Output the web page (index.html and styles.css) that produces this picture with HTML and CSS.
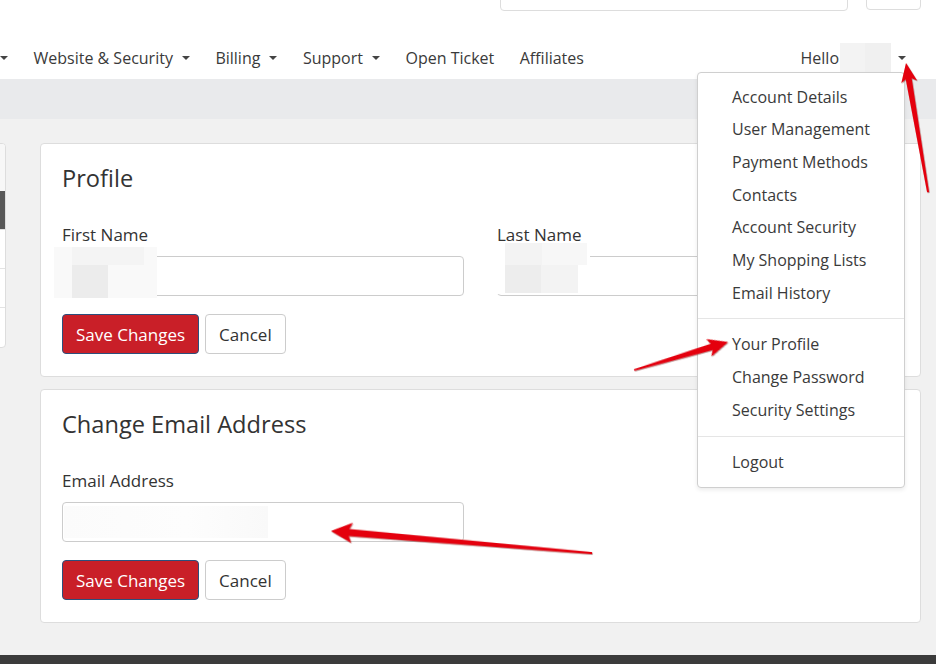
FILE: index.html
```html
<!DOCTYPE html>
<html lang="en">
<head>
	<meta charset="UTF-8">
	<title>Your Profile</title>
	<link rel="stylesheet" href="styles.css">
</head>
<body>
	<div class="topbar">
		<div class="search"></div>
		<div class="cart"></div>
	</div>

	<div class="navbar">
		<ul class="menu">
			<li class="drop"></li>
			<li class="drop">Website &amp; Security</li>
			<li class="drop">Billing</li>
			<li class="drop">Support</li>
			<li>Open Ticket</li>
			<li>Affiliates</li>
		</ul>
		<div class="account">
			<span>Hello</span>
			<span class="name"></span>
			<span class="caret"></span>

			<div class="dropdown">
				<a>Account Details</a>
				<a>User Management</a>
				<a>Payment Methods</a>
				<a>Contacts</a>
				<a>Account Security</a>
				<a>My Shopping Lists</a>
				<a>Email History</a>
				<div class="divider"></div>
				<a>Your Profile</a>
				<a>Change Password</a>
				<a>Security Settings</a>
				<div class="divider"></div>
				<a>Logout</a>
			</div>
		</div>
	</div>

	<div class="breadcrumb"></div>

	<div class="main">
		<div class="sidebar">
			<div class="side-head"></div>
			<div class="side-item active"></div>
			<div class="side-item"></div>
			<div class="side-item"></div>
			<div class="side-item last"></div>
		</div>

		<div class="content">
			<div class="card">
				<h3>Profile</h3>
				<div class="row">
					<div class="field">
						<label>First Name</label>
						<div class="input"></div>
						<div class="blur b1"></div>
						<div class="blur b1a"></div>
						<div class="blur b2"></div>
					</div>
					<div class="field">
						<label>Last Name</label>
						<div class="input"></div>
						<div class="blur b3"></div>
						<div class="blur b4"></div>
						<div class="blur b5"></div>
					</div>
				</div>
				<div class="actions">
					<button class="btn btn-save">Save Changes</button>
					<button class="btn">Cancel</button>
				</div>
			</div>

			<div class="card">
				<h3>Change Email Address</h3>
				<div class="row">
					<div class="field">
						<label>Email Address</label>
						<div class="input"></div>
						<div class="blur b6"></div>
					</div>
				</div>
				<div class="actions">
					<button class="btn btn-save">Save Changes</button>
					<button class="btn">Cancel</button>
				</div>
			</div>
		</div>
	</div>

	<div class="footer"></div>

	<!-- annotation arrows -->
	<svg class="arrows" width="936" height="664" viewBox="0 0 936 664">
		<defs>
			<filter id="sh" x="-10%" y="-10%" width="120%" height="120%">
				<feDropShadow dx="0.6" dy="0.8" stdDeviation="0.6" flood-color="#600" flood-opacity="0.5"/>
			</filter>
		</defs>
		<g fill="#e4000f" filter="url(#sh)">
			<polygon transform="translate(906 63) rotate(80.3)" points="0,0 19,-8 16,-3 131,-1 131,1 16,3 19,8"/>
			<polygon transform="translate(728 342) rotate(163.4)" points="0,0 20,-9 17,-3.2 98,-0.8 98,0.8 17,3.2 20,9"/>
			<polygon transform="translate(331 531) rotate(4.84)" points="0,0 21,-10 18,-3.5 262,-0.9 262,0.9 18,3.5 21,10"/>
		</g>
	</svg>
</body>
</html>
```

FILE: styles.css
```css
*{
	padding: 0;
	margin: 0;
	box-sizing: border-box;
}
li{
	list-style: none;
}
body{
	position: relative;
	width: 936px;
	height: 664px;
	overflow: hidden;
	background: #f1f1f1;
	font-family: "Open Sans", "Liberation Sans", sans-serif;
	font-size: 16px;
	color: #333;
}

/* header */
.topbar{
	display: flex;
	height: 36px;
	padding-right: 15px;
	background: #fff;
	justify-content: flex-end;
	gap: 18px;
}
.search{
	margin-top: -29px;
	width: 348px;
	height: 40px;
	border: 1px solid #ddd;
	border-radius: 4px;
}
.cart{
	margin-top: -30px;
	width: 55px;
	height: 40px;
	border: 1px solid #ddd;
	border-radius: 4px;
}
.navbar{
	position: relative;
	display: flex;
	height: 43px;
	padding-right: 30px;
	background: #fff;
	justify-content: space-between;
	align-items: center;
	color: #3a3a3a;
	z-index: 2;
}
.menu{
	display: flex;
	margin-left: -9px;
	gap: 25.5px;
}
.menu li{
	display: flex;
	align-items: center;
}
.drop::after,
.caret{
	content: "";
	display: inline-block;
	margin-left: 9px;
	border-top: 4px solid #444;
	border-left: 4px solid transparent;
	border-right: 4px solid transparent;
}
.account{
	position: relative;
	display: flex;
	align-items: center;
}
.name{
	display: inline-block;
	margin-left: 1px;
	width: 51px;
	height: 30px;
	background: linear-gradient(90deg, #f3f3f3 0, #f3f3f3 50%, #f0f0f0 50%);
}
.caret{
	margin-left: 7px;
}
.dropdown{
	position: absolute;
	top: 29px;
	right: 1px;
	width: 208px;
	padding: 8px 0 9px;
	background: #fff;
	border: 1px solid #cfcfcf;
	border-radius: 4px;
	box-shadow: 0 2px 4px rgba(0,0,0,.08);
}
.dropdown a{
	display: block;
	padding-left: 34px;
	line-height: 32.7px;
	color: #3a3a3a;
}
.divider{
	margin: 9px 0;
	height: 1px;
	background: #e5e5e5;
}
.breadcrumb{
	height: 40px;
	background: #e9eaec;
}

/* main area */
.main{
	display: flex;
	height: 536px;
	padding: 24px 15px 0 0;
	gap: 34px;
}
.sidebar{
	flex: none;
	margin-left: -194px;
	width: 200px;
	height: 205px;
	background: #fff;
	border: 1px solid #ddd;
	border-radius: 4px;
	overflow: hidden;
}
.side-head{
	height: 47px;
	background: #f7f7f7;
}
.side-item{
	height: 39px;
	border-top: 1px solid #e3e3e3;
}
.side-item.active{
	height: 38px;
	background: #585858;
	border-top: 0;
}
.content{
	flex: 1;
}
.card{
	margin-bottom: 12px;
	padding: 20px 21px 22px;
	background: #fff;
	border: 1px solid #ddd;
	border-radius: 4px;
}
.card h3{
	font-size: 23.6px;
	font-weight: 400;
	line-height: 29px;
	color: #333;
}
.row{
	display: grid;
	margin-top: 30px;
	grid-template-columns: 1fr 1fr;
	gap: 33px;
}
.field{
	position: relative;
}
.field label{
	display: block;
	font-size: 17px;
	line-height: 24px;
	color: #333;
}
.input{
	margin-top: 9px;
	height: 40px;
	border: 1px solid #ccc;
	border-radius: 4px;
}
.blur{
	position: absolute;
}
.b1{ left: -8px; top: 24px; width: 103px; height: 51px; background: #f9f9f9; }
.b1a{ left: 10px; top: 24px; width: 72px; height: 18px; background: #f4f4f4; }
.b2{ left: 10px; top: 42px; width: 36px; height: 33px; background: #ececec; }
.b3{ left: -1px; top: 20px; width: 94px; height: 51px; background: #fff; }
.b4{ left: 8px; top: 20px; width: 82px; height: 22px; background: linear-gradient(90deg, #f3f3f3 0, #f3f3f3 45%, #f7f7f7 45%); }
.b5{ left: 8px; top: 42px; width: 73px; height: 28px; background: linear-gradient(90deg, #ededed 0, #ededed 50%, #f3f3f3 50%); }
.b6{ left: 2px; top: 37px; width: 204px; height: 32px; background: linear-gradient(90deg, #fbfbfb, #fdfdfd 60%, #f9f9f9); }
.actions{
	display: flex;
	margin-top: 18px;
	gap: 6px;
}
.btn{
	height: 40px;
	padding: 0 13px;
	font-family: inherit;
	font-size: 17px;
	color: #333;
	background: #fff;
	border: 1px solid #ccc;
	border-radius: 4px;
}
.btn-save{
	color: #fff;
	background: #c91f28;
	border-color: #2c4f7c;
}
.footer{
	height: 9px;
	background: #3b3b3b;
}
.arrows{
	position: absolute;
	top: 0;
	left: 0;
	z-index: 5;
	pointer-events: none;
}
```
